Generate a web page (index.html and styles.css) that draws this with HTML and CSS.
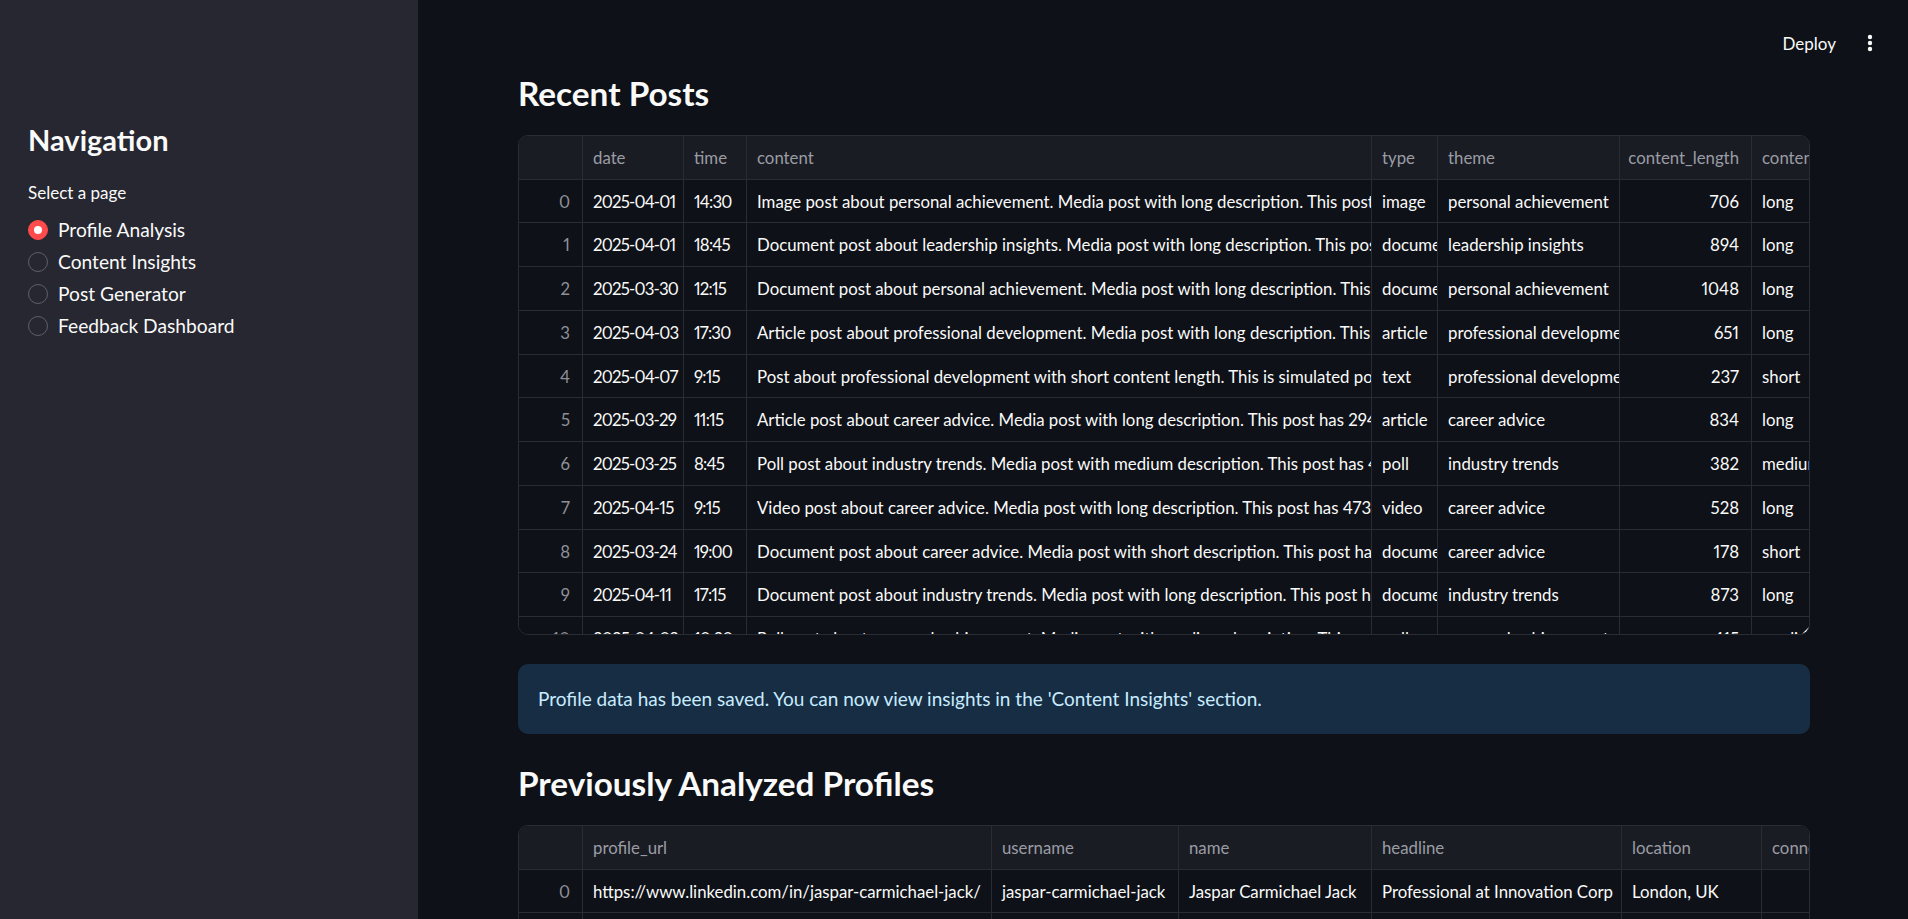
FILE: index.html
```html
<!DOCTYPE html>
<html lang="en">
<head>
<meta charset="utf-8">
<title>Profile Analysis</title>
<link rel="stylesheet" href="styles.css">
</head>
<body>
<div class="app">
  <aside class="sidebar">
    <h2 class="side-title">Navigation</h2>
    <div class="radio-label">Select a page</div>
    <div class="radio-group">
      <div class="radio-row"><span class="radio radio-on"></span><span class="radio-text">Profile Analysis</span></div>
      <div class="radio-row"><span class="radio"></span><span class="radio-text">Content Insights</span></div>
      <div class="radio-row"><span class="radio"></span><span class="radio-text">Post Generator</span></div>
      <div class="radio-row"><span class="radio"></span><span class="radio-text">Feedback Dashboard</span></div>
    </div>
  </aside>

  <main class="main">
    <div class="topbar">
      <span class="deploy">Deploy</span>
      <svg class="kebab" width="8" height="20" viewBox="0 0 8 20" aria-hidden="true">
        <circle cx="4" cy="4" r="2.2" fill="#fafafa"/>
        <circle cx="4" cy="10" r="2.2" fill="#fafafa"/>
        <circle cx="4" cy="16" r="2.2" fill="#fafafa"/>
      </svg>
    </div>

    <h3 class="section-title">Recent Posts</h3>
    <div class="table table-posts">
      <div class="grid grid-posts">
        <div class="cell head"></div><div class="cell head">date</div><div class="cell head">time</div><div class="cell head">content</div><div class="cell head">type</div><div class="cell head">theme</div><div class="cell head num">content_length</div><div class="cell head">content_category</div>

        <div class="cell idx">0</div><div class="cell digits">2025-04-01</div><div class="cell digits">14:30</div><div class="cell">Image post about personal achievement. Media post with long description. This post has 315 likes and 42 comments.</div><div class="cell">image</div><div class="cell">personal achievement</div><div class="cell num">706</div><div class="cell">long</div>

        <div class="cell idx">1</div><div class="cell digits">2025-04-01</div><div class="cell digits">18:45</div><div class="cell">Document post about leadership insights. Media post with long description. This post has 402 likes and 57 comments.</div><div class="cell">document</div><div class="cell">leadership insights</div><div class="cell num">894</div><div class="cell">long</div>

        <div class="cell idx">2</div><div class="cell digits">2025-03-30</div><div class="cell digits">12:15</div><div class="cell">Document post about personal achievement. Media post with long description. This post has 518 likes and 63 comments.</div><div class="cell">document</div><div class="cell">personal achievement</div><div class="cell num">1048</div><div class="cell">long</div>

        <div class="cell idx">3</div><div class="cell digits">2025-04-03</div><div class="cell digits">17:30</div><div class="cell">Article post about professional development. Media post with long description. This post has 276 likes and 31 comments.</div><div class="cell">article</div><div class="cell">professional development</div><div class="cell num">651</div><div class="cell">long</div>

        <div class="cell idx">4</div><div class="cell digits">2025-04-07</div><div class="cell digits">9:15</div><div class="cell">Post about professional development with short content length. This is simulated post content.</div><div class="cell">text</div><div class="cell">professional development</div><div class="cell num">237</div><div class="cell">short</div>

        <div class="cell idx">5</div><div class="cell digits">2025-03-29</div><div class="cell digits">11:15</div><div class="cell">Article post about career advice. Media post with long description. This post has 294 likes and 38 comments.</div><div class="cell">article</div><div class="cell">career advice</div><div class="cell num">834</div><div class="cell">long</div>

        <div class="cell idx">6</div><div class="cell digits">2025-03-25</div><div class="cell digits">8:45</div><div class="cell">Poll post about industry trends. Media post with medium description. This post has 412 likes and 29 comments.</div><div class="cell">poll</div><div class="cell">industry trends</div><div class="cell num">382</div><div class="cell">medium</div>

        <div class="cell idx">7</div><div class="cell digits">2025-04-15</div><div class="cell digits">9:15</div><div class="cell">Video post about career advice. Media post with long description. This post has 473 likes and 61 comments.</div><div class="cell">video</div><div class="cell">career advice</div><div class="cell num">528</div><div class="cell">long</div>

        <div class="cell idx">8</div><div class="cell digits">2025-03-24</div><div class="cell digits">19:00</div><div class="cell">Document post about career advice. Media post with short description. This post has 133 likes and 12 comments.</div><div class="cell">document</div><div class="cell">career advice</div><div class="cell num">178</div><div class="cell">short</div>

        <div class="cell idx">9</div><div class="cell digits">2025-04-11</div><div class="cell digits">17:15</div><div class="cell">Document post about industry trends. Media post with long description. This post has 351 likes and 44 comments.</div><div class="cell">document</div><div class="cell">industry trends</div><div class="cell num">873</div><div class="cell">long</div>

        <div class="cell idx">10</div><div class="cell digits">2025-04-09</div><div class="cell digits">10:30</div><div class="cell">Poll post about personal achievement. Media post with medium description. This post has 220 likes and 18 comments.</div><div class="cell">poll</div><div class="cell">personal achievement</div><div class="cell num">415</div><div class="cell">medium</div>
      </div>
      <span class="resize-handle"></span>
    </div>

    <div class="info">Profile data has been saved. You can now view insights in the 'Content Insights' section.</div>

    <h3 class="section-title section-title-2">Previously Analyzed Profiles</h3>
    <div class="table table-profiles">
      <div class="grid grid-profiles">
        <div class="cell head"></div><div class="cell head">profile_url</div><div class="cell head">username</div><div class="cell head">name</div><div class="cell head">headline</div><div class="cell head">location</div><div class="cell head">connections</div>

        <div class="cell idx">0</div><div class="cell">https://www.linkedin.com/in/jaspar-carmichael-jack/</div><div class="cell">jaspar-carmichael-jack</div><div class="cell">Jaspar Carmichael Jack</div><div class="cell">Professional at Innovation Corp</div><div class="cell">London, UK</div><div class="cell"></div>

        <div class="cell idx">1</div><div class="cell">https://www.linkedin.com/in/jaspar-carmichael-jack/</div><div class="cell">jaspar-carmichael-jack</div><div class="cell">Jaspar Carmichael Jack</div><div class="cell">Professional at Innovation Corp</div><div class="cell">London, UK</div><div class="cell"></div>
      </div>
    </div>
  </main>
</div>
</body>
</html>
```

FILE: styles.css
```css
* {
  box-sizing: border-box;
}

html, body {
  margin: 0;
  height: 100%;
}

body {
  background: #0e1117;
  color: #fafafa;
  font-family: Lato, "Noto Sans", sans-serif;
  overflow: hidden;
}

.app {
  display: flex;
  height: 100vh;
}

/* ---------- sidebar ---------- */
.sidebar {
  width: 418px;
  flex: 0 0 418px;
  background: #262730;
  padding: 123px 29px 0 28px;
}

.side-title {
  margin: 0;
  font-size: 29px;
  line-height: 1.2;
  font-weight: 700;
  color: #fafafa;
}

.radio-label {
  margin-top: 25px;
  font-size: 17px;
  line-height: 1.2;
  color: #fafafa;
}

.radio-group {
  margin-top: 11px;
  display: flex;
  flex-direction: column;
}

.radio-row {
  height: 32px;
  display: flex;
  align-items: center;
  gap: 10px;
}

.radio {
  width: 20px;
  height: 20px;
  flex: 0 0 20px;
  border-radius: 50%;
  border: 1px solid #5e5f68;
  display: flex;
  align-items: center;
  justify-content: center;
}

.radio-on {
  background: #ff4b4b;
  border-color: #ff4b4b;
}

.radio-on::after {
  content: "";
  width: 8px;
  height: 8px;
  border-radius: 50%;
  background: #ffffff;
}

.radio-text {
  font-size: 19.2px;
  line-height: 32px;
  color: #fafafa;
}

/* ---------- main ---------- */
.main {
  position: relative;
  flex: 1;
  min-width: 0;
  padding: 74px 98px 0 100px;
  display: flex;
  flex-direction: column;
  overflow: hidden;
}

.topbar {
  position: absolute;
  top: 0;
  right: 0;
  height: 86px;
  display: flex;
  align-items: center;
  padding-right: 34px;
  gap: 30px;
}

.deploy {
  font-size: 17px;
  color: #fafafa;
}

.kebab {
  display: block;
}

.section-title {
  margin: 0;
  font-size: 33.3px;
  line-height: 1.2;
  font-weight: 700;
  color: #fafafa;
}

.section-title-2 {
  margin-top: 30px;
}

/* ---------- data tables ---------- */
.table {
  position: relative;
  margin-top: 21px;
  border: 1px solid #2a2c33;
  border-radius: 10px;
  overflow: hidden;
  flex: 0 0 auto;
}

.table-posts {
  height: 500px;
}

.table-profiles {
  height: 300px;
}

.grid {
  display: grid;
  grid-auto-rows: 43.75px;
  width: max-content;
}

.grid-posts {
  grid-template-columns: 64px 101px 63px 625px 66px 182px 132px 200px;
}

.grid-profiles {
  grid-template-columns: 64px 409px 187px 193px 250px 140px 200px;
}

.cell {
  border-right: 1px solid #2a2c33;
  border-bottom: 1px solid #2a2c33;
  padding: 0 0 0 10px;
  font-size: 16.8px;
  line-height: 43px;
  white-space: nowrap;
  overflow: hidden;
  color: #fafafa;
  background: #0e1117;
  font-variant-numeric: proportional-nums;
}

.digits {
  letter-spacing: -0.8px;
}

.head {
  background: #1a1c24;
  color: #9a9ca4;
}

.idx {
  color: #8e9098;
  text-align: right;
  padding: 0 12px 0 0;
}

.num {
  text-align: right;
  padding: 0 12px 0 0;
}

.resize-handle {
  position: absolute;
  right: 0;
  bottom: 0;
  width: 0;
  height: 0;
  border-left: 7px solid transparent;
  border-bottom: 7px solid #ffffff;
}

/* ---------- info alert ---------- */
.info {
  margin-top: 29px;
  background: #172d43;
  color: #c7ebff;
  border-radius: 10px;
  padding: 19px 20px;
  font-size: 19px;
  line-height: 32px;
  flex: 0 0 auto;
}
```
